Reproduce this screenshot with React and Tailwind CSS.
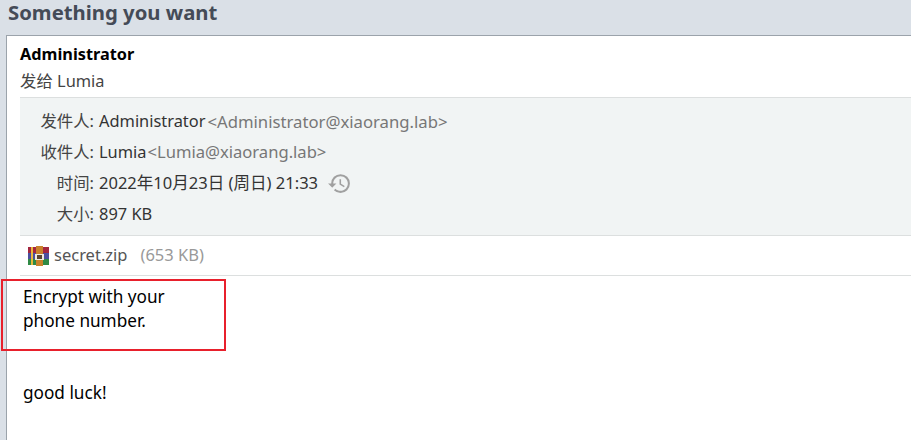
import { MdHistory } from "react-icons/md";

const font = { fontFamily: '"Noto Sans", "Noto Sans CJK SC", sans-serif' };

function InfoRow({ label, children }) {
  return (
    <div className="flex h-[31px] items-center whitespace-nowrap">
      <span className="w-[74px] text-right text-[#444]">{label}:</span>
      <span className="ml-[5px] flex items-center text-[#333]">{children}</span>
    </div>
  );
}

function ZipIcon() {
  return (
    <svg width="21" height="20" viewBox="0 0 21 20" className="shrink-0">
      <rect x="0" y="1" width="21" height="6" fill="#a3263f" />
      <rect x="0" y="7" width="21" height="6" fill="#4a4f9e" />
      <rect x="0" y="13" width="21" height="6" fill="#2f8a45" />
      <rect x="3" y="1" width="2" height="18" fill="#e8b83a" />
      <rect x="8" y="0" width="7" height="20" fill="#c9822b" />
      <rect x="7" y="8" width="9" height="6" fill="#eeeade" />
      <rect x="9" y="9" width="5" height="4" fill="#5a4630" />
    </svg>
  );
}

export default function App() {
  return (
    <div className="relative h-[440px] w-[911px] overflow-hidden bg-[#dae0e7]" style={font}>
      {/* subject */}
      <div className="h-[35px] pl-2 text-[20.3px] leading-[24px] font-bold text-[#444b57]">
        Something you want
      </div>

      {/* card */}
      <div className="ml-[6px] h-[405px] border-t border-l border-[#9ba3ab] bg-white pt-[8px] pl-[13px]">
        <div className="h-[20px] text-[16.3px] leading-5 font-bold text-black">Administrator</div>
        <div className="mt-[7px] h-[26px] text-[16.4px] leading-5 text-[#444]">发给 Lumia</div>

        <div className="border-y border-[#dcdfdf] bg-[#f1f4f4] pt-[8px] pb-[5px] text-[16.4px]">
          <InfoRow label="发件人">
            Administrator
            <span className="ml-[2px] text-[16.7px] text-[#777]">{"<Administrator@xiaorang.lab>"}</span>
          </InfoRow>
          <InfoRow label="收件人">
            Lumia
            <span className="ml-[1px] text-[16.6px] text-[#777]">{"<Lumia@xiaorang.lab>"}</span>
          </InfoRow>
          <InfoRow label="时间">
            <span className="text-[16.55px]">2022年10月23日 (周日) 21:33</span>
            <MdHistory size={25} className="ml-[9px] text-[#a0a0a0]" />
          </InfoRow>
          <InfoRow label="大小">897 KB</InfoRow>
        </div>

        <div className="flex h-[40px] items-center border-b border-[#dcdfdf] pl-2 text-[16.5px]">
          <ZipIcon />
          <span className="ml-[5px] text-[#555]">secret.zip</span>
          <span className="ml-[13px] text-[#999]">(653 KB)</span>
        </div>

        <div className="pt-[9px] pl-[3px] text-[17.2px] leading-6 text-black">
          <div className="w-[170px]">Encrypt with your phone number.</div>
          <div className="mt-[48px]">good luck!</div>
        </div>
      </div>

      {/* red annotation box */}
      <div className="absolute top-[279px] left-[1px] h-[72px] w-[225px] border-2 border-[#e8202c]" />
    </div>
  );
}
